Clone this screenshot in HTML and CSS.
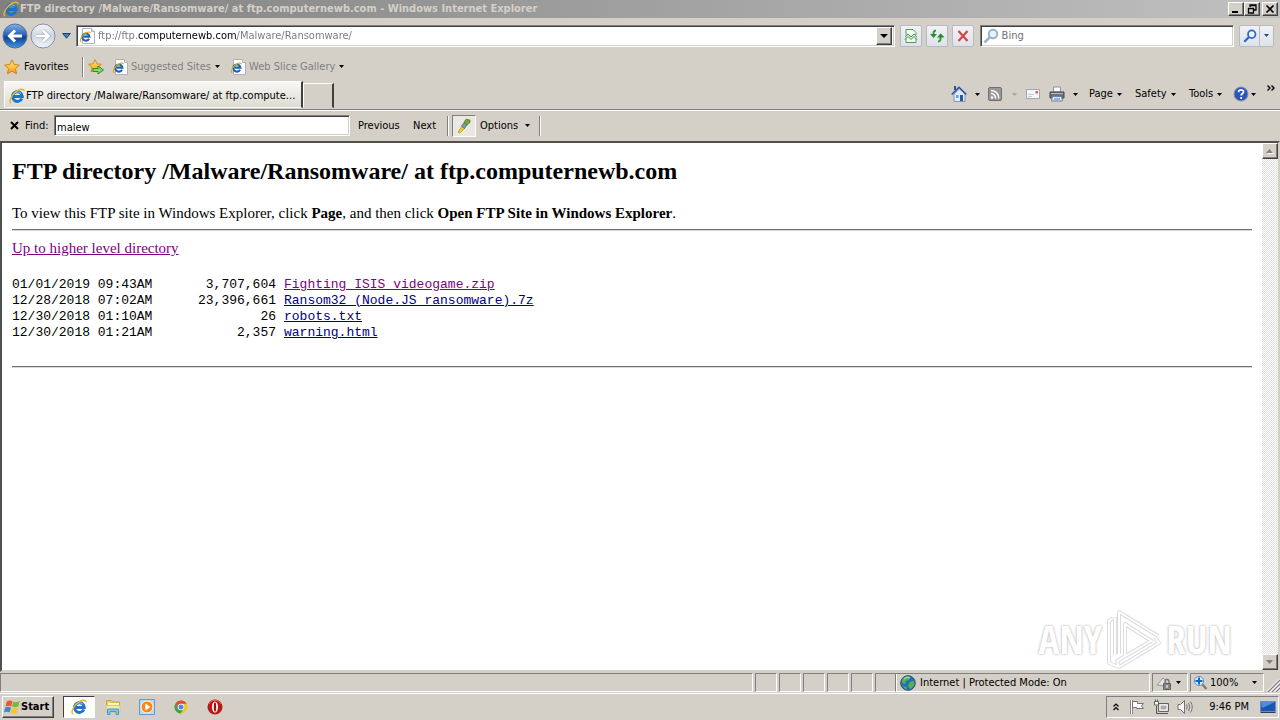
FILE: index.html
```html
<!DOCTYPE html>
<html lang="en">
<head>
<meta charset="utf-8">
<title>FTP directory /Malware/Ransomware/ at ftp.computernewb.com</title>
<link rel="stylesheet" href="styles.css">
</head>
<body>
<svg class="defs" width="0" height="0" aria-hidden="true">
  <defs>
    <linearGradient id="blue" x1="0" y1="0" x2="0" y2="1"><stop offset="0" stop-color="#7fb4ee"/><stop offset=".45" stop-color="#2b62b8"/><stop offset=".55" stop-color="#123f93"/><stop offset="1" stop-color="#3d9be8"/></linearGradient>
    <linearGradient id="pale" x1="0" y1="0" x2="0" y2="1"><stop offset="0" stop-color="#f4f6fa"/><stop offset=".5" stop-color="#cdd5e2"/><stop offset="1" stop-color="#f4f8fd"/></linearGradient>
    <linearGradient id="gold" x1="0" y1="0" x2="0" y2="1"><stop offset="0" stop-color="#ffe98a"/><stop offset="1" stop-color="#f79a10"/></linearGradient>
    <symbol id="ie" viewBox="0 0 16 16">
      <path d="M12.900 10.500A4.900 4.900 0 1 1 13.300 8.400H4.500" fill="none" stroke="#1c74c8" stroke-width="3"/>
      <path d="M4.200 6.300A5 5 0 0 1 11.800 5.200" fill="none" stroke="#5cc0f4" stroke-width="1.300"/>
      <path d="M2.200 15.200C-.4 14 1.600 8.600 6 4.600S15 .1 15.200 3.200" fill="none" stroke="#e9b51f" stroke-width="1.400"/>
    </symbol>
    <symbol id="iepage" viewBox="0 0 16 16">
      <path d="M3.500.5h9l3 3v12h-12z" fill="#fff" stroke="#a9b2c2"/>
      <path d="M12.500.5v3h3" fill="#dde4ef" stroke="#a9b2c2"/>
      <path d="M10 10.800A3.600 3.600 0 1 1 10.400 8.600H4.600" fill="none" stroke="#1c62b4" stroke-width="2.100"/>
      <path d="M2.400 13.800C.2 13.200 1.800 9 4.800 6.400S11 3.200 11.300 5.200" fill="none" stroke="#e0a81f" stroke-width="1.200"/>
    </symbol>
    <symbol id="star" viewBox="0 0 16 16"><path d="M8 .8l2.200 4.700 5.100.6-3.800 3.500 1 5.200L8 12.200l-4.500 2.600 1-5.200L.7 6.100l5.100-.6z" fill="url(#gold)" stroke="#cf850f"/></symbol>
    <symbol id="caret" viewBox="0 0 5 3"><path d="M0 0h5L2.500 3z" fill="currentColor"/></symbol>
    <symbol id="glass" viewBox="0 0 16 16"><circle cx="10" cy="6" r="4.300" fill="#e6f3fd" stroke="currentColor" stroke-width="2"/><path d="M6.800 9.200L1.500 14.500" stroke="currentColor" stroke-width="2.600"/></symbol>
  </defs>
</svg>

<header class="titlebar">
  <svg class="i16"><use href="#ie"/></svg>
  <h1 class="title">FTP directory /Malware/Ransomware/ at ftp.computernewb.com - Windows Internet Explorer</h1>
  <div class="winbtns">
    <button class="win" aria-label="Minimize"><svg viewBox="0 0 12 10"><path d="M2 8h6" stroke="#000" stroke-width="2"/></svg></button>
    <button class="win" aria-label="Restore"><svg viewBox="0 0 12 10"><path d="M4 3V1h6v5H8M4 1.500h6M2 4.500h6M2.500 4v5h5V4" fill="none" stroke="#000" stroke-width="1.300"/></svg></button>
    <button class="win close" aria-label="Close"><svg viewBox="0 0 12 10"><path d="M2.500 1.500l7 7m0-7l-7 7" stroke="#000" stroke-width="1.700"/></svg></button>
  </div>
</header>

<nav class="navrow">
  <button class="plain round" aria-label="Back"><svg viewBox="0 0 26 26"><circle cx="13" cy="13" r="12" fill="url(#blue)" stroke="#5f6f8b"/><path d="M20 13H8M13 7.500L7.500 13l5.500 5.500" fill="none" stroke="#fff" stroke-width="3"/></svg></button>
  <button class="plain round" aria-label="Forward"><svg viewBox="0 0 26 26"><circle cx="13" cy="13" r="12" fill="url(#pale)" stroke="#8790a2"/><path d="M6 13h12M13 7.500l5.500 5.500-5.500 5.500" fill="none" stroke="#a9b2c2" stroke-width="4"/><path d="M6 13h12M13 7.500l5.500 5.500-5.500 5.500" fill="none" stroke="#fff" stroke-width="2.600"/></svg></button>
  <button class="plain history" aria-label="Recent pages"><svg viewBox="0 0 9 6"><path d="M.7.5h7.600L4.500 5.200z" fill="#3a82c4" stroke="#1c3f70"/></svg></button>
  <div class="address sunken">
    <svg class="i16"><use href="#iepage"/></svg>
    <input class="url" type="text" aria-label="Address" value="ftp://ftp.computernewb.com/Malware/Ransomware/">
    <button class="drop raised" aria-label="Show address list"><svg viewBox="0 0 8 4"><path d="M0 0h8L4 4z"/></svg></button>
  </div>
  <button class="tool" aria-label="Compatibility view"><svg viewBox="0 0 16 16"><path d="M3 7V1.500h7L13 4.500V7M3 10v4.500h10V10" fill="#f5fbf3" stroke="#4f9d51"/><path d="M2 9l3-3 3 3 3-3 3 3M2 11.500l3-3 3 3 3-3 3 3" fill="none" stroke="#3b9640"/></svg></button>
  <button class="tool" aria-label="Refresh"><svg viewBox="0 0 16 16"><path d="M7 2.500C4.500 2.500 4.500 4 4.500 6.500M9 13.500c2.500 0 2.500-1.500 2.500-4.500" fill="none" stroke="#369a38" stroke-width="2"/><path d="M1 6h7L4.500 10zM8 9.500h7.500L11.700 5.200z" fill="#2b8c30"/></svg></button>
  <button class="tool" aria-label="Stop"><svg viewBox="0 0 16 16"><path d="M3.500 3l9 10M12.500 3l-9 10" stroke="#cf4945" stroke-width="2.200"/></svg></button>
  <div class="search sunken">
    <svg class="i16 paleglass"><use href="#glass"/></svg>
    <input class="bing" type="text" aria-label="Search" placeholder="Bing">
  </div>
  <div class="split">
    <button class="tool go" aria-label="Search Bing"><svg class="blueglass"><use href="#glass"/></svg></button>
    <button class="tool more" aria-label="Search options"><svg class="caret navy"><use href="#caret"/></svg></button>
  </div>
</nav>

<nav class="favrow">
  <button class="plain fav"><svg class="i16"><use href="#star"/></svg><span>Favorites</span></button>
  <span class="vline"></span>
  <button class="plain addfav" aria-label="Add to Favorites bar"><svg class="i16" viewBox="0 0 16 16"><use href="#star" width="14" height="14"/><path d="M5 9.500h5V7l5.500 4L10 15v-2.500H5z" fill="#7fdc62" stroke="#2a8f2b"/></svg></button>
  <button class="plain dim sites"><svg class="i16"><use href="#iepage"/></svg><span>Suggested Sites</span><svg class="caret"><use href="#caret"/></svg></button>
  <button class="plain dim"><svg class="i16"><use href="#iepage"/></svg><span>Web Slice Gallery</span><svg class="caret"><use href="#caret"/></svg></button>
</nav>

<div class="tabrow">
  <button class="tab"><svg class="i16"><use href="#ie"/></svg><span>FTP directory /Malware/Ransomware/ at ftp.compute...</span></button>
  <button class="newtab" aria-label="New tab"></button>
  <div class="commands">
    <button class="plain home" aria-label="Home"><svg class="i16" viewBox="0 0 16 16"><path d="M3 8v7.500h11V8L8.500 3z" fill="#e3ecf8" stroke="#7d95b8"/><path d="M.7 8.500L8 1.300l7.300 7.200" fill="none" stroke="#2a50a0" stroke-width="1.600"/><path d="M3 0h2v4H3z" fill="#324f8c"/><path d="M9 9h3v6H9z" fill="#315590"/><path d="M5 9h2.500v3H5z" fill="#54a8df"/></svg><svg class="caret"><use href="#caret"/></svg></button>
    <button class="plain feeds" aria-label="Feeds"><svg class="i16" viewBox="0 0 16 16"><rect x="1.500" y="1.500" width="13" height="13" rx="1.500" fill="#999" stroke="#6f6f6f"/><circle cx="5" cy="11.500" r="1.300" fill="#fff"/><path d="M4 7.500a4.500 4.500 0 0 1 4.500 5M4 4.500a7.500 7.500 0 0 1 7.700 8" fill="none" stroke="#fff" stroke-width="1.500"/></svg><svg class="caret faint"><use href="#caret"/></svg></button>
    <button class="plain mail" aria-label="Read mail"><svg class="i16" viewBox="0 0 16 16"><path d="M1.500 3.500h13v9h-13z" fill="#f6f6f8" stroke="#a2a5ad"/><path d="M10.500 5h2.500v2.500h-2.500z" fill="#cf5d64"/><path d="M3 8.500h6M3 10.500h4" stroke="#c6cad4"/></svg></button>
    <button class="plain print" aria-label="Print"><svg class="i16" viewBox="0 0 16 16"><path d="M4.500 1h7v5h-7z" fill="#fafbfd" stroke="#8994a6"/><path d="M1 6h14v6H1z" fill="#6b7079" stroke="#43474e"/><path d="M2 7.500h12" stroke="#b9bec8"/><path d="M3.500 10.500h9l1 4.500h-11z" fill="#dcebfa" stroke="#70819a"/><path d="M5 13h6" stroke="#3c7ac4"/></svg><svg class="caret"><use href="#caret"/></svg></button>
    <button class="plain page"><span>Page</span><svg class="caret"><use href="#caret"/></svg></button>
    <button class="plain safety"><span>Safety</span><svg class="caret"><use href="#caret"/></svg></button>
    <button class="plain tools"><span>Tools</span><svg class="caret"><use href="#caret"/></svg></button>
    <button class="plain help" aria-label="Help"><svg class="i16" viewBox="0 0 16 16"><circle cx="8" cy="8" r="7" fill="#2c55b4" stroke="#8793ab"/><path d="M5.500 6.200C5.500 3 10.700 3.200 10.500 6c-.1 1.500-2.300 1.700-2.300 3.600M8.200 11v2" fill="none" stroke="#fff" stroke-width="1.800"/></svg><svg class="caret"><use href="#caret"/></svg></button>
    <button class="plain chev" aria-label="More commands"><svg viewBox="0 0 8 6"><path d="M.5.5L3 3 .5 5.500M4.500.5L7 3 4.500 5.500" fill="none" stroke="#000" stroke-width="1.400"/></svg></button>
  </div>
</div>

<div class="findrow">
  <button class="plain x" aria-label="Close find bar"><svg viewBox="0 0 9 9"><path d="M1 1l7 7M8 1L1 8" stroke="#000" stroke-width="2"/></svg></button>
  <label for="find">Find:</label>
  <input id="find" class="find sunken" type="text" value="malew">
  <button class="plain prev">Previous</button>
  <button class="plain next">Next</button>
  <span class="vline"></span>
  <button class="hilite" aria-label="Highlight all matches"><svg class="i16" viewBox="0 0 16 16"><path d="M2 14l4-6 3 2-5 5z" fill="#e9cf2c" stroke="#a49a2c" stroke-width=".7"/><path d="M5.500 8L8 4.500 11 7l-2.500 3.500z" fill="#739cb0" stroke="#48697a" stroke-width=".7"/><path d="M8 4.500L10 1.200l4 .8v2.500L11 7z" fill="#76a831" stroke="#4f7723" stroke-width=".7"/></svg></button>
  <button class="plain options"><span>Options</span><svg class="caret"><use href="#caret"/></svg></button>
  <span class="vline"></span>
</div>

<div class="view">
  <main class="doc">
    <h2>FTP directory /Malware/Ransomware/ at ftp.computernewb.com</h2>
    <p>To view this FTP site in Windows Explorer, click <b>Page</b>, and then click <b>Open FTP Site in Windows Explorer</b>.</p>
    <hr>
    <a class="seen" href="#up">Up to higher level directory</a>
    <table class="files">
      <tr><td class="date">01/01/2019 09:43AM</td><td class="size">3,707,604</td><td><a class="seen" href="#f1">Fighting ISIS videogame.zip</a></td></tr>
      <tr><td class="date">12/28/2018 07:02AM</td><td class="size">23,396,661</td><td><a href="#f2">Ransom32 (Node.JS ransomware).7z</a></td></tr>
      <tr><td class="date">12/30/2018 01:10AM</td><td class="size">26</td><td><a href="#f3">robots.txt</a></td></tr>
      <tr><td class="date">12/30/2018 01:21AM</td><td class="size">2,357</td><td><a href="#f4">warning.html</a></td></tr>
    </table>
    <hr>
  </main>
  <div class="scroll">
    <button class="raised arrow" aria-label="Scroll up"><svg viewBox="0 0 8 4"><path d="M1 5h7L5 1z" fill="#fff"/><path d="M0 4h7L3.500 0z" fill="#808080"/></svg></button>
    <button class="raised arrow" aria-label="Scroll down"><svg viewBox="0 0 8 4"><path d="M0 0h7L3.500 4z" fill="#808080"/></svg></button>
  </div>
  <div class="watermark" role="img" aria-label="ANY RUN">
    <span>ANY</span>
    <svg viewBox="0 0 56 62"><g fill="none" stroke-linejoin="round"><path class="halo" d="M13 46V4l39 24M19 48V16l28 18M7 10L3 13v42l10 4 40-24-4-6M13 59l-2-6 34-20M9 9v38"/><path class="core" d="M13 46V4l39 24M19 48V16l28 18M7 10L3 13v42l10 4 40-24-4-6M13 59l-2-6 34-20M9 9v38"/></g></svg>
    <span>RUN</span>
  </div>
</div>

<footer class="status">
  <div class="pane main"></div>
  <div class="pane"></div><div class="pane"></div><div class="pane"></div><div class="pane"></div><div class="pane"></div><div class="pane"></div>
  <div class="pane zone"><svg class="i16" viewBox="0 0 16 16"><circle cx="8" cy="8" r="7.300" fill="#2870b6" stroke="#285078"/><path d="M2 5c2-4 6-4.500 8-3L9 5 6 6 5 9 2 8zM10 7l4-1c1.500 3-1 7-4 8L8 11zM3 11l3 1 1 2.500C5 14 3.500 12.500 3 11z" fill="#54b44b"/><path d="M4 4c2-2 5-2 6-1" stroke="#bce4fa" fill="none"/></svg><span>Internet | Protected Mode: On</span></div>
  <div class="pane lock"><svg class="i16" viewBox="0 0 16 16"><path d="M1 10l6-7 3 3-1 5z" fill="#e2e2e2" stroke="#999"/><path d="M7.500 8.500h7v6h-7z" fill="#858585" stroke="#626262"/><path d="M9 8V6.500a2 2 0 0 1 4 0V8" fill="none" stroke="#727272" stroke-width="1.300"/><path d="M11 10v3" stroke="#fff"/></svg><svg class="caret"><use href="#caret"/></svg></div>
  <button class="pane zoom"><svg class="i16" viewBox="0 0 16 16"><path d="M8.500 8.500l5 5.500" stroke="#8f7a66" stroke-width="2.500"/><circle cx="6" cy="6" r="4.600" fill="#d7edff" stroke="#5f91c8"/><path d="M6 2.500v7M2.500 6h7" stroke="#1764c8" stroke-width="2"/></svg><span>100%</span><svg class="caret"><use href="#caret"/></svg></button>
  <svg class="grip" viewBox="0 0 14 14"><path d="M2 14L14 2M6 14l8-8M10 14l4-4" stroke="#fff" stroke-width="3"/><path d="M2 14L14 2M6 14l8-8M10 14l4-4" stroke="#808080" stroke-width="1.300"/></svg>
</footer>

<footer class="taskbar">
  <button class="start raised"><svg class="i16" viewBox="0 0 16 16"><path d="M2.800 2.500q2.700-2 5.700-.3L7.300 7.500Q4.500 6 1.500 7.500z" fill="#e85a28"/><path d="M9.200 2.600q3 1.300 6.500-.5L14.300 7.500q-3.300 1.600-6.300 0z" fill="#79b83a"/><path d="M1.200 8.500Q4 7 7 8.400L5.600 13.500Q3 12 0 13.500z" fill="#3d86d4"/><path d="M7.800 8.500q3 1.500 6.300.2L12.800 14q-3.200 1.500-6.300-.3z" fill="#f6c52f"/></svg><span>Start</span></button>
  <button class="task active" aria-label="Internet Explorer"><svg class="i16"><use href="#ie"/></svg></button>
  <button class="task" aria-label="Windows Explorer"><svg class="i16" viewBox="0 0 16 16"><path d="M1.500 1.500h5l1 1.500h7v7h-13z" fill="#e9cb67" stroke="#c5a34a"/><path d="M3 4h11v5H3z" fill="#fff6c9"/><path d="M1 6.500h14V13H1z" fill="#f9eaa6" stroke="#dcc26c"/><path d="M2.500 15.500V10h11v5.500H11v-3H5v3z" fill="#80c5ed" stroke="#4799cb"/></svg></button>
  <button class="task" aria-label="Media Player"><svg class="i16" viewBox="0 0 16 16"><path d="M.5.5h15v15H.5z" fill="#b9daf3" stroke="#5d9bd2"/><circle cx="8" cy="8" r="6" fill="#f28a1c" stroke="#fff5dd"/><path d="M6.300 4.500v7L11.500 8z" fill="#fff"/></svg></button>
  <button class="task" aria-label="Chrome"><svg class="i16" viewBox="0 0 16 16"><circle cx="8" cy="8" r="6.500" fill="#f4c51d"/><path d="M2.300 4.800A6.500 6.500 0 0 1 13.700 4.800H8L5.200 9.600z" fill="#de4b39"/><path d="M2.300 4.800A6.500 6.500 0 0 0 7.500 14.500L10.800 9.600H5.200z" fill="#35a353"/><circle cx="8" cy="8" r="3.300" fill="#fff"/><circle cx="8" cy="8" r="2.500" fill="#4b89e8"/></svg></button>
  <button class="task" aria-label="Opera"><svg class="i16" viewBox="0 0 16 16"><circle cx="8" cy="8" r="7.500" fill="#b81a1a"/><path d="M2 5c2-5 10-5 12 0" fill="none" stroke="#e56a62"/><ellipse cx="8" cy="8" rx="3" ry="5.500" fill="#fff"/><ellipse cx="8" cy="8" rx="1.200" ry="4.800" fill="#9a1414"/></svg></button>
  <div class="tray">
    <button class="plain up" aria-label="Show hidden icons"><svg viewBox="0 0 6 8"><path d="M.5 3.500L3 1l2.500 2.500M.5 7L3 4.500 5.500 7" fill="none" stroke="#000" stroke-width="1.200"/></svg></button>
    <svg class="i16" viewBox="0 0 16 16"><path d="M2.500 1v14" stroke="#6f6f6f" stroke-width="2.500"/><path d="M2.500 1v14" stroke="#fff"/><path d="M3.500 2.500h5v2h6L12.500 7l2 2.500h-7v-1h-4z" fill="#fff" stroke="#747474"/></svg>
    <svg class="i16" viewBox="0 0 16 16"><path d="M5.500 4.500h10v8h-10z" fill="#cfcfcf" stroke="#646464"/><path d="M7 6h7v5H7z" fill="#aaa" stroke="#fff"/><path d="M6 14.500h9M3.500 7v7.500H8" stroke="#555" fill="none"/><path d="M1.500 2.500h4V6h-4zM2.500.5v2M4.500.5v2" fill="#fff" stroke="#646464"/></svg>
    <svg class="i16" viewBox="0 0 16 16"><path d="M1 5.500h2.500l4-4v13l-4-4H1z" fill="#f7f7f7" stroke="#727272"/><path d="M9.500 5.500q1.500 2.500 0 5M11.500 4q2.500 4 0 8M13.500 2.500q3.500 5.500 0 11" fill="none" stroke="#777"/></svg>
    <time class="clock">9:46 PM</time>
    <svg class="i16" viewBox="0 0 16 16"><path d="M.5 2.500h15v10H.5z" fill="#1c55b4" stroke="#6d8bb5"/><path d="M1 3h14L2 9z" fill="#4a8ee2"/><path d="M.5 13.500h15" stroke="#273f66"/></svg>
  </div>
</footer>
</body>
</html>
```
FILE: styles.css
```css
* { box-sizing: border-box; }
body {
  margin: 0;
  min-height: 100vh;
  display: flex;
  flex-direction: column;
  background: #d4d0c8;
  color: #000;
  font: 11px/14px "DejaVu Sans Condensed", "DejaVu Sans", sans-serif;
}
button, input { font: inherit; color: inherit; border-radius: 0; margin: 0; }
button { display: flex; align-items: center; padding: 0; white-space: nowrap; }
svg { display: block; flex: none; }
.defs { position: absolute; }
.i16 { width: 16px; height: 16px; }
.caret { width: 5px; height: 3px; color: #000; }
.caret.faint { color: #aaa59d; }
.caret.navy { color: #1d4990; }
.plain { border: 0; background: none; }
.raised {
  background: #d4d0c8;
  border: 1px solid;
  border-color: #fff #404040 #404040 #fff;
  box-shadow: inset -1px -1px #808080;
}
.sunken {
  background: #fff;
  border: 1px solid;
  border-color: #808080 #fff #fff #808080;
  box-shadow: inset 1px 1px #404040, inset -1px -1px #d4d0c8;
}
.vline { width: 2px; height: 20px; border-left: 1px solid #808080; border-right: 1px solid #fff; }

.titlebar {
  display: flex;
  align-items: center;
  height: 18px;
  gap: 1px;
  padding: 0 2px 0 3px;
  background: linear-gradient(90deg, #808080, #c0c0c0);
}
.title { flex: 1; margin: 0; font-size: 11px; font-weight: bold; color: #d4d0c8; white-space: nowrap; }
.winbtns { display: flex; }
.win {
  width: 16px;
  height: 14px;
  justify-content: center;
  background: #d4d0c8;
  border: 1px solid;
  border-color: #fff #404040 #404040 #fff;
  box-shadow: inset -1px -1px #808080;
}
.win svg { width: 12px; height: 10px; }
.win.close { margin-left: 2px; }

.navrow { display: flex; align-items: center; height: 35px; padding: 0 6px 0 2px; }
.round { margin-right: 2px; }
.round svg { width: 26px; height: 26px; }
.history { width: 18px; padding-right: 2px; justify-content: center; }
.history svg { width: 9px; height: 6px; }
.address { display: flex; align-items: center; flex: 1; height: 22px; padding: 2px; margin-right: 5px; }
.url {
  flex: 1;
  min-width: 0;
  height: 16px;
  padding: 0;
  margin-left: 3px;
  border: 0;
  color: transparent;
  background: linear-gradient(90deg, #777 40px, #000 40px, #000 139px, #777 139px);
  -webkit-background-clip: text;
  background-clip: text;
}
.drop { width: 16px; height: 18px; justify-content: center; }
.drop svg { width: 8px; height: 4px; }
.tool {
  width: 22px;
  height: 22px;
  margin-right: 4px;
  justify-content: center;
  border: 1px solid #b5bac4;
  border-radius: 2px;
  background: linear-gradient(#f1f2f5, #dfe2ea);
}
.tool svg { width: 16px; height: 16px; }
.search { display: flex; align-items: center; width: 20%; height: 22px; padding: 2px; margin: 0 5px 0 2px; }
.paleglass { color: #9ab2c8; }
.bing { flex: 1; min-width: 0; height: 16px; padding: 0; margin-left: 3px; border: 0; background: none; }
.bing::placeholder { color: #707070; opacity: 1; }
.split { display: flex; }
.tool.go { width: 21px; margin: 0; border-radius: 2px 0 0 2px; }
.tool.more { width: 14px; margin: 0; border-left: 0; border-radius: 0 2px 2px 0; }
.tool .blueglass { width: 14px; height: 14px; color: #2868c8; }
.tool .caret { width: 5px; height: 3px; }

.favrow { display: flex; align-items: center; height: 27px; padding-left: 4px; }
.fav { width: 78px; gap: 4px; }
.addfav { margin: 0 8px 0 4px; }
.dim { gap: 3px; color: #808080; }
.dim .caret { margin-left: 1px; }
.sites { width: 118px; }

.tabrow { display: flex; align-items: flex-end; height: 30px; padding-left: 4px; border-bottom: 1px solid #808080; box-shadow: 0 1px #fff; }
.tab {
  width: 299px;
  height: 27px;
  padding: 2px 4px 0;
  margin-bottom: 1px;
  gap: 1px;
  border: 1px solid;
  border-color: #fff #404040 transparent #fff;
  border-right-width: 2px;
  background: linear-gradient(#f8f7f4, #dedbd3);
  overflow: hidden;
}
.newtab { width: 31px; height: 25px; margin-bottom: 1px; background: none; border: 1px solid; border-color: #fff #404040 transparent #fff; border-right-width: 2px; }
.commands { display: flex; align-items: center; height: 30px; margin-left: auto; padding-right: 5px; }
.commands button { justify-content: flex-start; }
.home { width: 36px; gap: 8px; }
.feeds { width: 38px; gap: 9px; }
.mail { width: 24px; }
.print { width: 40px; gap: 8px; }
.page { width: 46px; gap: 4px; }
.safety { width: 54px; gap: 4px; }
.tools { width: 44px; gap: 4px; }
.help { width: 34px; gap: 2px; }
.chev { height: 30px; padding-bottom: 12px; }
.chev svg { width: 8px; height: 6px; }

.findrow { display: flex; align-items: center; height: 31px; padding-left: 10px; white-space: nowrap; }
.x { width: 15px; }
.x svg { width: 9px; height: 9px; }
.findrow label { width: 29px; }
.find { width: 296px; height: 21px; padding: 3px 2px 0; }
.prev { width: 55px; padding-left: 8px; }
.next { width: 42px; padding-left: 8px; }
.hilite {
  width: 24px;
  height: 22px;
  margin: 0 4px 0 3px;
  justify-content: center;
  border: 1px solid;
  border-color: #808080 #fff #fff #808080;
  background: #eae8e3;
}
.options { width: 59px; gap: 7px; }

.view { position: relative; flex: 1; display: flex; background: #fff; border: 2px solid #404040; border-color: #505050 #d4d0c8 #d4d0c8 #505050; }
.doc { flex: 1; padding: 14px 10px; font: 15px/18px "Liberation Serif", "Times New Roman", serif; }
.doc h2 { margin: 0; font-size: 24px; line-height: 28px; }
.doc p { margin: 19px 0 7px; }
.doc hr { height: 2px; margin: 0 0 8px; border: 0; border-top: 1px solid #707070; border-bottom: 1px solid #d8d8d8; }
.doc a { color: #000080; }
.doc a.seen { color: #800080; }
.files { margin: 20px 0 25px; border-spacing: 0; font: 13px/16px "Liberation Mono", "Courier New", monospace; }
.files td { padding: 0 8px 0 0; height: 16px; }
.files .date { width: 152px; }
.files .size { width: 120px; text-align: right; }
.scroll {
  display: flex;
  flex-direction: column;
  justify-content: space-between;
  width: 16px;
  background: repeating-conic-gradient(#fff 0 25%, #e3e0db 0 50%) 0 0 / 2px 2px;
}
.arrow { width: 16px; height: 16px; justify-content: center; }
.arrow svg { width: 8px; height: 4px; overflow: visible; }
.watermark {
  position: absolute;
  right: 46px;
  bottom: 0;
  display: flex;
  align-items: center;
  gap: 4px;
  color: #fff;
  font: 300 39px/60px "Open Sans Condensed", "DejaVu Sans Condensed", sans-serif;
  text-shadow: 0 0 2px #bbb, 0 0 3px #ccc;
}
.watermark svg { width: 56px; height: 62px; }
.halo { stroke: #dcdcdc; stroke-width: 4px; }
.core { stroke: #fff; stroke-width: 2px; }

.status { display: flex; align-items: center; gap: 2px; height: 22px; padding: 1px 0; border-bottom: 1px solid #fff; }
.pane {
  display: flex;
  align-items: center;
  width: 22px;
  height: 19px;
  padding: 0;
  background: none;
  border: 1px solid;
  border-color: #808080 #fff #fff #808080;
}
.pane.main { flex: 1; }
.zone { width: 255px; padding-left: 4px; gap: 4px; margin-left: -4px; }
.lock { width: 36px; padding-left: 3px; gap: 4px; }
.zoom { width: 74px; padding-left: 2px; gap: 1px; }
.zoom .caret { margin-left: 13px; }
.grip { width: 14px; height: 14px; align-self: flex-end; }

.taskbar { display: flex; align-items: center; height: 26px; padding: 0 1px 0 2px; }
.start { width: 52px; height: 22px; padding-left: 1px; font-weight: bold; gap: 1px; margin-right: 9px; }
.task { width: 32px; height: 22px; margin-right: 2px; justify-content: center; background: none; border: 1px solid transparent; }
.task.active { background: #fff; border-color: #404040 #fff #fff #404040; }
.tray { display: flex; align-items: center; height: 22px; margin-left: auto; padding: 0 2px 0 6px; gap: 8px; border: 1px solid; border-color: #808080 #fff #fff #808080; }
.up { margin-right: 2px; }
.up svg { width: 6px; height: 8px; }
.clock { margin: 0 3px 0 8px; }
```
